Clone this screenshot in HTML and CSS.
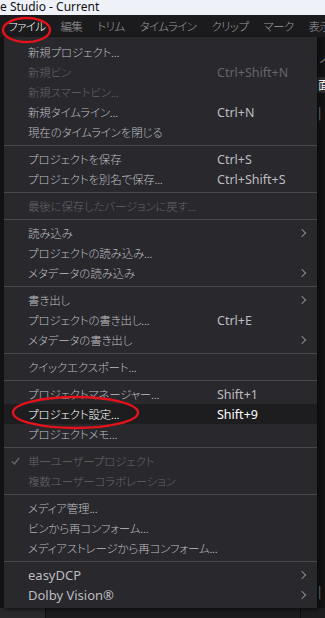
FILE: index.html
```html
<!DOCTYPE html>
<html lang="ja">
<head>
    <meta charset="UTF-8">
    <meta name="viewport" content="width=device-width, initial-scale=1.0">
    <title>DaVinci Resolve - File menu</title>
    <link rel="stylesheet" href="styles.css">
</head>
<body>
    <div class="titlebar">e Studio - Current</div>
    <div class="menubar">
        <span class="menubar-item open">ファイル</span>
        <span class="menubar-item">編集</span>
        <span class="menubar-item">トリム</span>
        <span class="menubar-item">タイムライン</span>
        <span class="menubar-item">クリップ</span>
        <span class="menubar-item">マーク</span>
        <span class="menubar-item">表示</span>
    </div>
    <div class="workspace">
        <div class="side">
            <div class="side-glyph dim">ノ</div>
            <div class="side-glyph tab">面</div>
            <div class="side-glyph bar">|</div>
        </div>
        <div class="spacer"></div>
        <div class="side side-bottom">
            <div class="side-glyph bar">|</div>
        </div>
        <div class="footer">
            <div class="footer-cell first"></div>
            <div class="footer-cell mid"></div>
            <div class="footer-cell"></div>
        </div>

        <div class="dropdown">
            <div class="item"><span></span><span class="label">新規プロジェクト...</span></div>
            <div class="item disabled"><span></span><span class="label">新規ビン</span><span class="shortcut">Ctrl+Shift+N</span></div>
            <div class="item disabled"><span></span><span class="label">新規スマートビン...</span></div>
            <div class="item"><span></span><span class="label">新規タイムライン...</span><span class="shortcut">Ctrl+N</span></div>
            <div class="item"><span></span><span class="label">現在のタイムラインを閉じる</span></div>
            <div class="sep"></div>
            <div class="item"><span></span><span class="label">プロジェクトを保存</span><span class="shortcut">Ctrl+S</span></div>
            <div class="item"><span></span><span class="label">プロジェクトを別名で保存...</span><span class="shortcut">Ctrl+Shift+S</span></div>
            <div class="sep"></div>
            <div class="item disabled"><span></span><span class="label">最後に保存したバージョンに戻す...</span></div>
            <div class="sep"></div>
            <div class="item"><span></span><span class="label">読み込み</span><span class="shortcut"></span><span class="arrow"></span></div>
            <div class="item"><span></span><span class="label">プロジェクトの読み込み...</span></div>
            <div class="item"><span></span><span class="label">メタデータの読み込み</span><span class="shortcut"></span><span class="arrow"></span></div>
            <div class="sep"></div>
            <div class="item"><span></span><span class="label">書き出し</span><span class="shortcut"></span><span class="arrow"></span></div>
            <div class="item"><span></span><span class="label">プロジェクトの書き出し...</span><span class="shortcut">Ctrl+E</span></div>
            <div class="item"><span></span><span class="label">メタデータの書き出し</span><span class="shortcut"></span><span class="arrow"></span></div>
            <div class="sep"></div>
            <div class="item"><span></span><span class="label">クイックエクスポート...</span></div>
            <div class="sep"></div>
            <div class="item"><span></span><span class="label">プロジェクトマネージャー...</span><span class="shortcut">Shift+1</span></div>
            <div class="item active"><span></span><span class="label">プロジェクト設定...</span><span class="shortcut">Shift+9</span></div>
            <div class="item"><span></span><span class="label">プロジェクトメモ...</span></div>
            <div class="sep"></div>
            <div class="item disabled">
                <svg class="check" width="9" height="8" viewBox="0 0 9 8"><polyline points="1,4.5 3.5,7 8,1" fill="none" stroke="currentColor" stroke-width="1.4"/></svg>
                <span class="label">単一ユーザープロジェクト</span>
            </div>
            <div class="item disabled"><span></span><span class="label">複数ユーザーコラボレーション</span></div>
            <div class="sep"></div>
            <div class="item"><span></span><span class="label">メディア管理...</span></div>
            <div class="item"><span></span><span class="label">ビンから再コンフォーム...</span></div>
            <div class="item"><span></span><span class="label">メディアストレージから再コンフォーム...</span></div>
            <div class="sep"></div>
            <div class="item"><span></span><span class="label latin">easyDCP</span><span class="shortcut"></span><span class="arrow"></span></div>
            <div class="item"><span></span><span class="label latin">Dolby Vision®</span><span class="shortcut"></span><span class="arrow"></span></div>
        </div>
    </div>

    <svg class="marks" width="325" height="618" viewBox="0 0 325 618">
        <ellipse cx="26.5" cy="30" rx="23.5" ry="12" fill="none" stroke="#e3121b" stroke-width="2.4"/>
        <ellipse cx="75.5" cy="412.5" rx="62.5" ry="15.5" fill="none" stroke="#e3121b" stroke-width="2.4"/>
    </svg>
</body>
</html>
```

FILE: styles.css
```css
:root {
    --menu-bg: #28282d;
    --text: #bdbdc0;
    --text-dim: #65656a;
    --sep: #47474c;
}
body {
    margin: 0;
    padding: 0;
    width: 325px;
    height: 618px;
    overflow: hidden;
    position: relative;
    background: #131314;
    font-family: "Noto Sans", "Noto Sans CJK JP", sans-serif;
    display: flex;
    flex-direction: column;
}
.titlebar {
    height: 15px;
    line-height: 13px;
    background: #eef2f8;
    color: #111;
    font-size: 12px;
    white-space: nowrap;
}
.menubar {
    height: 22px;
    display: flex;
    align-items: center;
    gap: 15px;
    padding-left: 8px;
    background: #1b1b1d;
    font-family: "Noto Sans CJK JP", sans-serif;
    font-feature-settings: "palt";
    font-weight: 300;
    font-size: 11.5px;
    letter-spacing: -0.6px;
    color: #9c9c9e;
    white-space: nowrap;
    overflow: hidden;
}
.menubar-item.open { color: #fff; }

/* app area behind the open menu */
.workspace {
    flex: 1;
    position: relative;
    display: flex;
    flex-direction: column;
}
.side {
    margin-left: 317px;
    padding-top: 14px;
    font-family: "Noto Sans CJK JP", sans-serif;
    font-size: 12px;
}
.side-glyph { height: 14px; line-height: 14px; padding-left: 1px; }
.side-glyph.dim { color: #7a7a7a; }
.side-glyph.tab { margin-top: 12px; background: #2a2a2c; color: #fff; height: 16px; line-height: 16px; }
.side-glyph.bar { margin-top: 12px; color: #8a8a8a; }
.spacer { flex: 1; }
.side-bottom { padding: 0 0 10px; }
.footer {
    height: 10px;
    display: flex;
    background: #1c1c1e;
}
.footer-cell { flex: 1; }
.footer-cell.first { flex: 0 0 45px; background: #29292b; border-right: 1px solid #0e0e0e; }
.footer-cell.mid { flex: 0 0 254px; border-right: 1px solid #0e0e0e; }

/* dropdown */
.dropdown {
    position: absolute;
    left: 3px;
    top: 0;
    width: 314px;
    box-sizing: border-box;
    padding: 5px 0 3px;
    background: var(--menu-bg);
    border-left: 1px solid #121214;
    box-shadow: 2px 2px 4px rgba(0, 0, 0, 0.5);
    font-family: "Noto Sans CJK JP", sans-serif;
    font-feature-settings: "palt";
    font-weight: 300;
    font-size: 11.5px;
    color: var(--text);
}
.item {
    height: 20px;
    display: grid;
    grid-template-columns: 24px 189px 1fr 16px;
    align-items: center;
    white-space: nowrap;
}
.item.disabled { color: var(--text-dim); }
.item.active { background: #1d1d1f; color: #fff; }
.label { letter-spacing: -0.2px; }
.label.latin { font-family: "Noto Sans", sans-serif; font-weight: 400; font-size: 13px; letter-spacing: 0; }
.shortcut {
    font-family: "Noto Sans", sans-serif;
    font-weight: 400;
    font-size: 12.5px;
}
.arrow {
    width: 5px;
    height: 5px;
    border-right: 1.3px solid #8b8b8e;
    border-top: 1.3px solid #8b8b8e;
    transform: rotate(45deg);
    margin-left: -2px;
}
.check { margin-left: 7px; }
.sep {
    height: 1px;
    margin: 3px 0;
    background: var(--sep);
}
.marks {
    position: absolute;
    left: 0;
    top: 0;
    pointer-events: none;
}
```
